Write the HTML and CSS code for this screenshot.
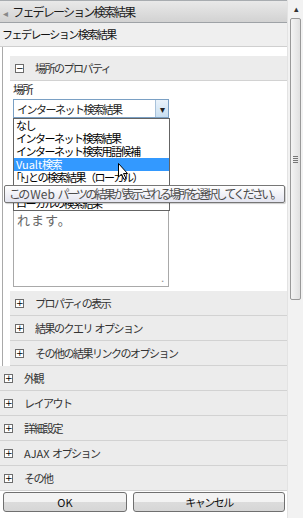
FILE: index.html
```html
<!DOCTYPE html>
<html lang="ja">
<head>
    <meta charset="UTF-8">
    <title>フェデレーション検索結果</title>
    <link rel="stylesheet" href="styles.css">
</head>
<body>
    <div class="pane">
        <div class="main">
            <!-- barra de titulo -->
            <div class="titlebar"><span class="back">◂</span>フェデレーション検索結果</div>
            <div class="subtitle">フェデレーション検索結果</div>

            <div class="content">
                <div class="group">
                    <div class="row head"><span class="box">−</span>場所のプロパティ</div>

                    <div class="field">
                        <div class="label">場所</div>
                        <div class="select">
                            <span>インターネット検索結果</span>
                            <span class="drop">▾</span>
                        </div>
                        <div class="textarea">
                            <div class="ta-text">れます。</div>
                            <span class="grip">⠠</span>
                        </div>

                        <ul class="list">
                            <li>なし</li>
                            <li>インターネット検索結果</li>
                            <li>インターネット検索用語候補</li>
                            <li class="sel"><span class="lat">Vualt</span>検索</li>
                            <li>｢ﾄ｣との検索結果（ローカル）</li>
                            <li>ローカルの人物検索結果</li>
                            <li>ローカルの検索結果</li>
                        </ul>
                        <svg class="cursor" width="12" height="18" viewBox="0 0 12 18">
                            <path d="M0.5 0.5 L0.5 14 L3.5 11 L6 16.5 L8 15.5 L5.5 10.5 L9.5 10.5 Z" fill="#fff" stroke="#000" stroke-width="1"/>
                        </svg>
                        <div class="tooltip">この<span class="lat">&nbsp;Web&nbsp;</span>パーツの結果が表示される場所を選択してください。</div>
                    </div>

                    <div class="row sub"><span class="box">+</span>プロパティの表示</div>
                    <div class="row sub"><span class="box">+</span>結果のクエリ<span class="lat">&nbsp;</span>オプション</div>
                    <div class="row sub"><span class="box">+</span>その他の結果リンクのオプション</div>
                </div>
            </div>

            <div class="row top"><span class="box">+</span>外観</div>
            <div class="row top"><span class="box">+</span>レイアウト</div>
            <div class="row top"><span class="box">+</span>詳細設定</div>
            <div class="row top"><span class="box">+</span><span class="lat">AJAX&nbsp;</span>オプション</div>
            <div class="row top"><span class="box">+</span>その他</div>

            <div class="buttons">
                <button class="btn ok"><span class="lat">OK</span></button>
                <button class="btn cancel">キャンセル</button>
            </div>
        </div>

        <!-- barra de desplazamiento -->
        <div class="scrollbar">
            <div class="arrow">▴</div>
            <div class="thumb"><span class="gripper"></span></div>
        </div>
    </div>
</body>
</html>
```

FILE: styles.css
```css
body {
    margin: 0;
    width: 303px;
    height: 518px;
    overflow: hidden;
    background: #ffffff;
    font-family: "Noto Sans CJK JP", "Liberation Sans", sans-serif;
    font-size: 11px;
    letter-spacing: -1.5px;
    color: #222;
}

.lat {
    letter-spacing: 0;
}

.pane {
    display: flex;
    height: 518px;
}

.main {
    width: 287px;
    display: flex;
    flex-direction: column;
}

.titlebar {
    height: 23px;
    line-height: 21px;
    border-top: 1px solid #a8acb0;
    border-bottom: 1px solid #9ea2a6;
    background: linear-gradient(#e9e9e9, #d2d2d2);
    font-size: 12px;
    letter-spacing: -1.8px;
    padding-left: 3px;
    box-sizing: border-box;
    color: #1a1a1a;
}

.back {
    color: #888;
    font-size: 10px;
    margin-right: 6px;
}

.subtitle {
    height: 23px;
    line-height: 22px;
    background: #efefef;
    border-bottom: 1px solid #cfcfcf;
    padding-left: 2px;
    color: #111;
}

.content {
    padding-top: 9px;
    border-left: 1px solid #a9a9a9;
    margin-left: 2px;
}

.group {
    margin-left: 7px;
}

.row {
    display: flex;
    align-items: center;
    height: 24px;
    background: #ececec;
    border-bottom: 1px solid #d2d2d2;
    color: #333;
}

.box {
    width: 7px;
    height: 7px;
    border: 1px solid #6c6c6c;
    background: #fff;
    font-size: 9px;
    line-height: 7px;
    letter-spacing: 0;
    text-align: center;
    font-family: "DejaVu Sans", sans-serif;
    color: #000;
    margin-right: 11px;
}

.head .box, .sub .box {
    margin-left: 5px;
}

.top .box {
    margin-left: 4px;
    margin-right: 11px;
}

.field {
    position: relative;
    padding: 1px 0 4px 3px;
    background: #fff;
}

.label {
    height: 17px;
    line-height: 15px;
}

.select {
    width: 156px;
    height: 19px;
    border: 1px solid #7aa0c4;
    display: flex;
    align-items: center;
    justify-content: space-between;
    background: #fff;
    padding-left: 3px;
    box-sizing: border-box;
}

.drop {
    width: 12px;
    height: 17px;
    border-left: 1px solid #a9c2da;
    background: linear-gradient(#eaf3fb, #c9dff1);
    font-size: 10px;
    letter-spacing: 0;
    line-height: 17px;
    text-align: center;
    color: #222;
}

.textarea {
    position: relative;
    width: 156px;
    height: 169px;
    border: 1px solid #a9a9a9;
    box-sizing: border-box;
    padding: 91px 0 0 3px;
    color: #666;
    font-size: 13px;
    letter-spacing: 1px;
}

.grip {
    position: absolute;
    right: 2px;
    bottom: 0;
    color: #999;
    font-size: 9px;
}

.list {
    position: absolute;
    left: 3px;
    top: 37px;
    width: 157px;
    margin: 0;
    padding: 0;
    list-style: none;
    background: #fff;
    border: 1px solid #646464;
    box-sizing: border-box;
}

.list li {
    height: 13px;
    line-height: 13px;
    padding-left: 2px;
    color: #000;
    white-space: nowrap;
    overflow: hidden;
}

.list .sel {
    background: #3399ff;
    color: #fff;
}

.cursor {
    position: absolute;
    left: 108px;
    top: 82px;
}

.tooltip {
    position: absolute;
    left: -6px;
    top: 104px;
    width: 281px;
    height: 18px;
    line-height: 16px;
    box-sizing: border-box;
    border: 1px solid #767676;
    border-radius: 2px;
    background: linear-gradient(#ffffff, #e4e5f0);
    padding-left: 4px;
    font-size: 12px;
    letter-spacing: -2.7px;
    color: #4c4c4c;
    white-space: nowrap;
    box-shadow: 1px 1px 1px rgba(0, 0, 0, 0.2);
}

.buttons {
    display: flex;
    gap: 6px;
    padding: 1px 0 0 3px;
}

.btn {
    height: 20px;
    border: 1px solid #707070;
    border-radius: 3px;
    background: linear-gradient(#f3f3f3 50%, #dcdcdc 50%, #d6d6d6);
    font-family: "Noto Sans CJK JP", "Liberation Sans", sans-serif;
    font-size: 11px;
    letter-spacing: -1.5px;
    padding: 0;
    color: #111;
}

.ok {
    width: 124px;
}

.cancel {
    width: 152px;
}

.scrollbar {
    width: 16px;
    background: #f2f2f2;
    border-left: 1px solid #e3e3e3;
    box-sizing: border-box;
    display: flex;
    flex-direction: column;
    align-items: center;
}

.arrow {
    height: 18px;
    line-height: 17px;
    font-size: 9px;
    color: #333;
}

.thumb {
    width: 11px;
    height: 282px;
    border: 1px solid #999;
    border-radius: 2px;
    box-sizing: border-box;
    background: linear-gradient(90deg, #f4f4f4, #e0e0e0);
    display: flex;
    align-items: center;
    justify-content: center;
}

.gripper {
    width: 5px;
    height: 7px;
    background: repeating-linear-gradient(#777 0 1px, transparent 1px 2px);
}
```
